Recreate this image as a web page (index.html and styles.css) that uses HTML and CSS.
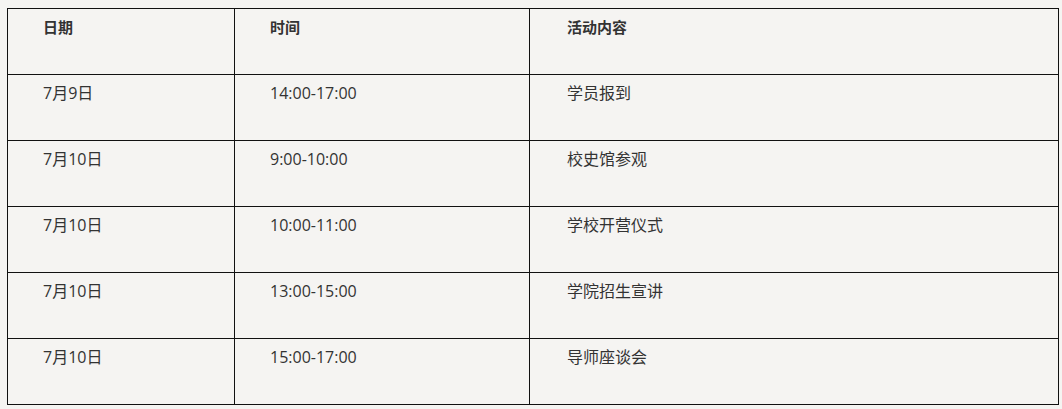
FILE: index.html
```html
<!DOCTYPE html>
<html lang="zh">
<head>
<meta charset="utf-8">
<link rel="stylesheet" href="styles.css">
</head>
<body>
<table class="schedule">
  <colgroup>
    <col class="c1"><col class="c2"><col class="c3">
  </colgroup>
  <tr class="head"><td>日期</td><td>时间</td><td>活动内容</td></tr>
  <tr><td>7月9日</td><td>14:00-17:00</td><td>学员报到</td></tr>
  <tr><td>7月10日</td><td>9:00-10:00</td><td>校史馆参观</td></tr>
  <tr><td>7月10日</td><td>10:00-11:00</td><td>学校开营仪式</td></tr>
  <tr><td>7月10日</td><td>13:00-15:00</td><td>学院招生宣讲</td></tr>
  <tr><td>7月10日</td><td>15:00-17:00</td><td>导师座谈会</td></tr>
</table>
</body>
</html>
```
FILE: styles.css
```css
html, body {
  margin: 0;
  padding: 0;
  background: #f5f4f2;
}
body {
  padding: 8px 0 0 7px;
  font-family: "Open Sans", "Noto Sans CJK SC", sans-serif;
  font-size: 16px;
  color: #333;
}
.schedule {
  border-collapse: collapse;
  width: 1051px;
  table-layout: fixed;
}
.c1 { width: 227px; }
.c2 { width: 295px; }
.c3 { width: 529px; }
.schedule td {
  border: 1px solid #111;
  height: 66px;
  box-sizing: border-box;
  vertical-align: top;
  padding: 6px 10px 0 35px;
  line-height: 24px;
}
.head td {
  font-weight: bold;
  font-size: 15px;
}
.schedule td:nth-child(3) {
  padding-left: 37px;
}
```
